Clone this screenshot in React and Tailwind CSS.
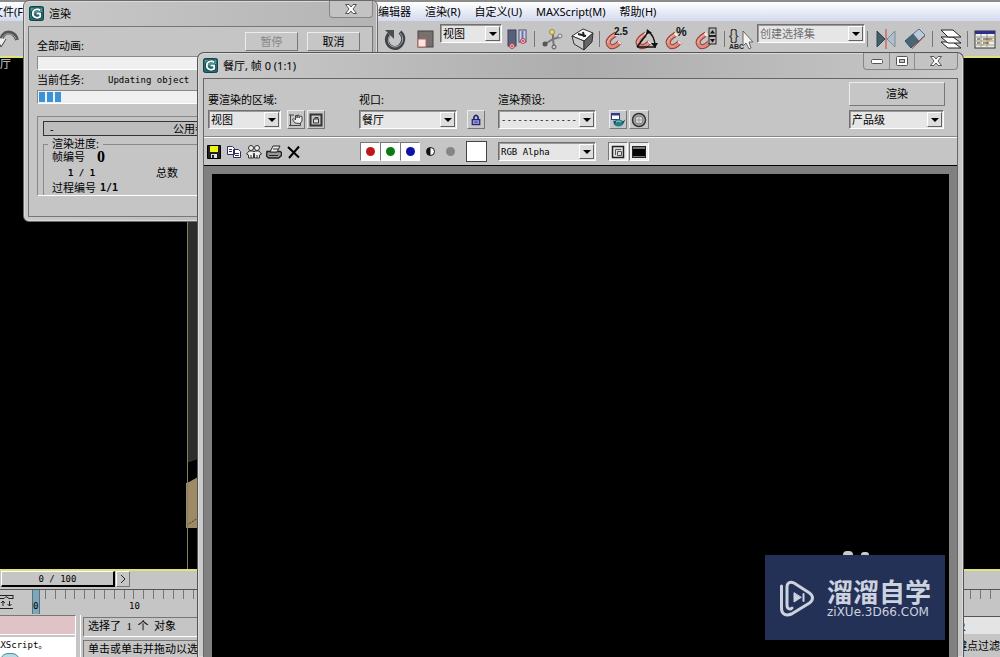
import React from 'react'
import clsx from 'clsx'

const menus = ['编辑器', '渲染(R)', '自定义(U)', 'MAXScript(M)', '帮助(H)']
const ticks = Array.from({ length: 98 }, (_, i) => i)

function AppLogo() {
  return (
    <svg viewBox="0 0 16 16" className="size-[15px] shrink-0">
      <rect x="0.5" y="0.5" width="15" height="15" rx="2" fill="#1d6d70" stroke="#0b3b42" />
      <path d="M2 2h12v5C9 5 5 8 2 12z" fill="#4f9c9b" />
      <path d="M12.500 4.500C9 2.500 3.500 3.500 3.500 8s5 5.500 9 3.500V8H8" fill="none" stroke="#0b3b42" strokeWidth="3" strokeLinejoin="round" />
      <path d="M12 4.500C9 2.500 4 3.500 4 8s5 5.500 8 3.500V8H8" fill="none" stroke="#fff" strokeWidth="2" strokeLinejoin="round" />
    </svg>
  )
}

// Native select with the flat 3D arrow button on its right side
function Combo({ label, id, value, className, muted, mono }) {
  return (
    <div className={clsx('relative h-[19px] shrink-0 border border-[#707070] border-r-white border-b-white bg-[#e6e6e6] shadow-[inset_1px_1px_0_#9a9a9a]', className)}>
      <select
        id={id}
        aria-label={label}
        className={clsx(
          'block h-full w-full appearance-none overflow-hidden bg-transparent pr-4 pl-[2px] leading-4 outline-none',
          muted ? 'text-[#707070]' : 'text-black',
          mono ? "font-['DejaVu_Sans_Mono',monospace] text-[9px]" : 'text-[11px]'
        )}
      >
        <option>{value}</option>
      </select>
      <span className="pointer-events-none absolute inset-y-px right-px flex w-[15px] items-center justify-center border border-white border-r-[#606060] border-b-[#606060] bg-[#dedede]">
        <svg viewBox="0 0 8 4" className="h-1 w-2">
          <path d="M0 0h8L4 4z" fill="#000" />
        </svg>
      </span>
    </div>
  )
}

function PushButton({ children, className, disabled }) {
  return (
    <button
      type="button"
      disabled={disabled}
      className={clsx('border border-[#ececec] border-r-[#777] border-b-[#777] bg-[#c6c6c6] text-[11px] leading-4', disabled ? 'text-[#868686]' : 'text-black', className)}
    >
      {children}
    </button>
  )
}

function IconButton({ label, variant, className, children }) {
  return (
    <button
      type="button"
      aria-label={label}
      className={clsx(
        'flex h-[19px] w-5 shrink-0 items-center justify-center',
        variant === 'raised' && 'border border-[#ececec] border-r-[#777] border-b-[#777] bg-[#c6c6c6]',
        variant === 'pressed' && 'border border-[#777] border-r-white border-b-white bg-[#ececec]',
        className
      )}
    >
      {children}
    </button>
  )
}

function Tool({ label, flyout, children }) {
  return (
    <button type="button" aria-label={label} className="relative flex h-8 w-[30px] shrink-0 items-center justify-center">
      <svg viewBox="0 0 24 24" className="size-6 overflow-visible" fill="none">
        {children}
      </svg>
      {flyout && (
        <svg viewBox="0 0 3 3" className="absolute right-0 bottom-0 size-[3px]">
          <path d="M3 0v3H0z" fill="#222" />
        </svg>
      )}
    </button>
  )
}

function Separator() {
  return (
    <div className="flex h-4 w-[5px] shrink-0 justify-center">
      <div className="w-px bg-[#777]" />
    </div>
  )
}

function Magnet() {
  return (
    <g>
      <path d="M11 7C6 10 1 14 4 18s8 0 11-3" stroke="#8f4038" strokeWidth="5" />
      <path d="M11 7C6 10 1 14 4 18s8 0 11-3" stroke="#df8a7d" strokeWidth="3" />
      <path d="M10 7C6 10 2 13 3 16" stroke="#f3c1b6" strokeWidth="1" />
      <path d="M10 8l2-1M14 16l1-1" stroke="#f5eee8" strokeWidth="4" />
    </g>
  )
}

function MainToolbar() {
  return (
    <div className="flex h-[35px] shrink-0 items-center bg-[#c5c5c5] text-[11px]">
      <div className="flex w-[380px] shrink-0">
        <button type="button" aria-label="撤消" className="-ml-1">
          <svg viewBox="0 0 24 24" className="size-6" fill="none">
            <path d="M6 17c-2-8 3-13 9-11 3 1 5 3 6 7" stroke="#555" strokeWidth="4" />
            <path d="M6 15c-1-6 4-9 8-8 3 1 5 2 6 5" stroke="#aaa" strokeWidth="1" />
            <path d="M1 11l4 9 5-8" fill="#eee" stroke="#444" />
          </svg>
        </button>
      </div>
      <Tool label="旋转">
        <path d="M17 5c7 7 1 16-5 16S1 14 6 7" stroke="#3f4348" strokeWidth="4" />
        <path d="M17 6c6 6 1 14-5 14S3 14 7 8" stroke="#a5a9ad" strokeWidth="1" />
        <path d="M2 3l9 0v9z" fill="#4a4e52" />
      </Tool>
      <Tool label="缩放" flyout>
        <rect x="5" y="4" width="15" height="16" fill="#77706e" stroke="#444" />
        <rect x="5" y="12" width="8" height="8" fill="#fbe4df" stroke="#a66" />
      </Tool>
      <div className="h-[29px] shrink-0">
        <Combo label="参考坐标系" value="视图" className="w-[62px]" />
      </div>
      <Tool label="轴点中心" flyout>
        <rect x="3" y="3" width="8" height="16" fill="#596079" stroke="#3b405a" />
        <rect x="14" y="3" width="7" height="12" fill="#cfd3e8" stroke="#4b5378" />
        <path d="M17.500 4v11" stroke="#6973a8" strokeWidth="2" />
        <circle cx="7" cy="19" r="2.500" fill="#e8c9cf" stroke="#c03a4c" />
        <circle cx="18" cy="14" r="2.500" fill="#e8c9cf" stroke="#c03a4c" />
        <circle cx="7" cy="19" r="1" fill="#c03a4c" />
        <circle cx="18" cy="14" r="1" fill="#c03a4c" />
      </Tool>
      <Separator />
      <Tool label="选择并操纵">
        <path d="M13 12V5M13 12l7-2M13 12l-8 5M13 12l1 8" stroke="#777" strokeWidth="2" />
        <circle cx="12" cy="5" r="2.500" fill="#e8d879" stroke="#9a8a3c" />
        <circle cx="20" cy="9" r="2" fill="#ddd" stroke="#777" />
        <circle cx="5" cy="17" r="2.500" fill="#555" />
        <circle cx="14" cy="20" r="2" fill="#ccc" stroke="#555" />
      </Tool>
      <Tool label="键盘快捷键覆盖">
        <path d="M2 9L13 2l10 4-9 8z" fill="#fafafa" stroke="#333" />
        <path d="M2 9l12 5v9L4 17z" fill="#c9c9c9" stroke="#333" />
        <path d="M14 14l9-8-1 9-8 8z" fill="#666" stroke="#333" />
        <path d="M8 7l8 2M13 5l1 5" stroke="#222" strokeWidth="2" />
      </Tool>
      <Separator />
      <Tool label="捕捉开关" flyout>
        <Magnet />
        <text x="9" y="8" fontSize="10" fontWeight="700" fill="#111" fontFamily="Liberation Sans, sans-serif">2.5</text>
      </Tool>
      <Tool label="角度捕捉">
        <Magnet />
        <path d="M2 20L14 4M2 20h19M13 4c5 4 7 9 7 15" stroke="#111" strokeWidth="1.500" />
        <path d="M11 7l1-5 5 4zM16 16h7l-3 5z" fill="#111" />
      </Tool>
      <Tool label="百分比捕捉">
        <Magnet />
        <text x="11" y="9" fontSize="12" fontWeight="700" fill="#111" fontFamily="Liberation Sans, sans-serif">%</text>
      </Tool>
      <Tool label="微调器捕捉">
        <Magnet />
        <rect x="14" y="1" width="7" height="16" fill="#bbb" stroke="#222" />
        <path d="M14 9h7" stroke="#222" strokeWidth="2" />
        <path d="M15 6.500L17.500 3 20 6.500zM15 12L17.500 15.500 20 12z" fill="#111" />
      </Tool>
      <Separator />
      <Tool label="编辑命名选择集">
        <text x="-1" y="13" fontSize="14" fill="#333" fontFamily="Liberation Sans, sans-serif">{'{}'}</text>
        <text x="-1" y="22" fontSize="7" fontWeight="700" fill="#222" fontFamily="Liberation Sans, sans-serif">ABC</text>
        <path d="M13 4v15l3-3 3 6 2-1-2-6h4z" fill="#f4f4f4" stroke="#666" />
      </Tool>
      <div className="h-[29px] shrink-0">
        <Combo label="命名选择集" value="创建选择集" muted className="w-[108px]" />
      </div>
      <Separator />
      <Tool label="镜像">
        <path d="M4 4l8 8-8 8z" fill="#43606e" stroke="#2d4450" />
        <path d="M22 4l-8 8 8 8z" fill="#aebfca" stroke="#7c8e99" />
        <path d="M13 2v20" stroke="#c9403a" />
      </Tool>
      <Tool label="对齐" flyout>
        <path d="M2 14l8-7 6 7-8 7z" fill="#496675" stroke="#33505f" />
        <path d="M10 7l6-5 6 6-6 6z" fill="#bccbdc" stroke="#566e85" />
        <path d="M9 22L22 9" stroke="#d2604e" />
      </Tool>
      <Separator />
      <Tool label="层管理器">
        <path d="M3 15h12l8 6H10z" fill="#fff" stroke="#222" />
        <path d="M3 10h12l8 6H10z" fill="#fff" stroke="#222" />
        <path d="M3 3h12l8 7H10z" fill="#fff" stroke="#222" />
      </Tool>
      <Separator />
      <Tool label="曲线编辑器">
        <rect x="2" y="4" width="20" height="17" fill="#f1efe0" stroke="#333" />
        <path d="M2 5.500h20" stroke="#2b2f8f" strokeWidth="3" />
        <path d="M8 7v14M2 10h20M2 14h20M2 18h20M14 7v14" stroke="#999" />
        <path d="M4 12h3M4 16h3M10 12h9M10 16h6" stroke="#333" />
        <path d="M9 18l6-4 6-3" stroke="#c7a92c" />
      </Tool>
    </div>
  )
}

function Viewport() {
  return (
    <div className="relative min-h-0 flex-1 overflow-hidden border-y-2 border-[#e2e27a] bg-black">
      <span className="absolute top-0 -left-[11px] text-[11px] leading-3 text-[#d4d4d4]">餐厅</span>
      <svg className="ml-[186px] block h-full w-[12px]" fill="none">
        <rect x="2" y="150" width="10" height="254" fill="#2d2d2d" />
        <path d="M1 405l11-4v18H1z" fill="#000" />
        <path d="M0 425l3-1 9-5v51H0z" fill="#9f8a68" />
        <path d="M1 467l11-7" stroke="#473c2c" strokeDasharray="2 1" />
        <path d="M1.500 0v520" stroke="#84805a" />
      </svg>
    </div>
  )
}

function TimeSlider() {
  return (
    <div className="shrink-0 bg-[#c5c5c5] font-['DejaVu_Sans_Mono','Noto_Sans_CJK_SC',monospace] text-[9px]">
      <div className="flex h-[18px] gap-px pl-px">
        <button type="button" className="h-4 w-[114px] border border-white border-r-2 border-r-black border-b-2 border-b-black leading-3">
          0 / 100
        </button>
        <button type="button" aria-label="下一帧" className="flex h-4 w-[14px] items-center justify-center border border-white border-r-[#777] border-b-[#777]">
          <svg viewBox="0 0 6 10" className="h-[10px] w-[6px]" fill="none">
            <path d="M1 1l4 4-4 4" stroke="#222" />
          </svg>
        </button>
      </div>
      <div className="flex h-[26px] border-t border-[#555]">
        <div className="w-8 shrink-0 pt-1">
          <svg viewBox="0 0 14 16" className="h-4 w-[14px]" fill="none" stroke="#222">
            <path d="M0 1.500h13M0 4.500h4l2-2 3 2h4M13 1v4M0 14.500h13" />
            <path d="M3 7v5M1 9l2-2 2 2M9.500 7v5M7.500 10l2 2 2-2" />
          </svg>
        </div>
        <div className="flex h-6 w-1 shrink-0 border-l border-[#4d7385] bg-[#7fa5b8]" />
        <div className="flex min-w-0 flex-1">
          {ticks.map((t) => (
            <div key={t} className={clsx('h-[9px] min-w-0 flex-1', t > 0 ? 'border-l border-[#777]' : 'relative')}>
              {t === 0 && <div className="h-6 w-1 border-r border-[#4d7385] bg-[#7fa5b8]" />}
              {t === 0 && <span className="absolute top-2 -left-[3px] leading-4">0</span>}
              {t > 0 && t % 10 === 0 && (
                <span className="flex w-4 -translate-x-2 justify-center pt-2 leading-4">{t}</span>
              )}
            </div>
          ))}
        </div>
      </div>
    </div>
  )
}

function StatusBar() {
  return (
    <div className="flex h-[42px] shrink-0 overflow-hidden bg-[#c5c5c5] text-[11px] leading-4 whitespace-nowrap">
      <div className="flex w-[76px] shrink-0 flex-col border-t border-r border-[#777] border-r-white">
        <div className="h-[19px] shrink-0 border-b border-white bg-[#dfc3c6]" />
        <div className="mt-[2px] shrink-0 bg-white">
          <div className="-ml-[5px] font-['DejaVu_Sans_Mono','Noto_Sans_CJK_SC',monospace] text-[9px] leading-4">AXScript。</div>
          <div className="h-4 w-5 rounded-full border border-[#4c8aa3] bg-[#b9dbe6]" />
        </div>
      </div>
      <div className="ml-1 flex min-w-0 flex-1 flex-col gap-[3px] border-l border-white pt-[2px] pl-[2px]">
        <div className="h-5 shrink-0 border border-[#777] border-r-white border-b-white pl-1 font-['Liberation_Serif','Noto_Sans_CJK_SC',serif]">选择了&nbsp; 1 &nbsp;个&nbsp; 对象</div>
        <div className="h-5 shrink-0 border border-[#777] border-r-white border-b-white pl-1">单击或单击并拖动以选择对象</div>
      </div>
      <div className="w-[78px] shrink-0 overflow-hidden">
        <input aria-label="选定对象" defaultValue="选定对象" className="mt-px block h-[18px] w-full border-t border-[#555] bg-[#e4e4e4]" />
        <button type="button" className="mt-1 pl-[23px] text-left">关键点过滤器...</button>
      </div>
    </div>
  )
}

function CaptionButtons({ closeOnly }) {
  return (
    <div className="flex h-[17px] rounded-b border border-t-0 border-[#858585] bg-[#c3c3c3]">
      {!closeOnly && (
        <>
          <button type="button" aria-label="最小化" className="flex w-[26px] items-center justify-center border-r border-[#8d8d8d]">
            <svg viewBox="0 0 12 5" className="h-[5px] w-3">
              <rect x="0.500" y="0.500" width="11" height="4" rx="1" fill="#fff" stroke="#555" />
            </svg>
          </button>
          <button type="button" aria-label="最大化" className="flex w-[25px] items-center justify-center border-r border-[#8d8d8d]">
            <svg viewBox="0 0 12 10" className="h-[10px] w-3">
              <rect x="0.500" y="0.500" width="11" height="9" rx="1" fill="#fff" stroke="#555" />
              <rect x="3.500" y="3.500" width="5" height="3" fill="#c3c3c3" stroke="#555" />
            </svg>
          </button>
        </>
      )}
      <button type="button" aria-label="关闭" className="flex w-[42px] items-center justify-center">
        <svg viewBox="0 0 12 10" className="h-[10px] w-3">
          <path d="M0.500 0.500h3.500l2 2.500 2-2.500h3.500L8 5l3.500 4.500H8L6 7 4 9.500H0.500L4 5z" fill="#fff" stroke="#555" />
        </svg>
      </button>
    </div>
  )
}

function ProgressDialog() {
  return (
    <section className="absolute top-0 left-[23px] flex h-[222px] w-[355px] flex-col rounded-[6px] border border-[#6a6a6a] bg-linear-to-r from-[#c9c9c9] to-[#b4b4b4] px-1 pb-1 text-[11px] leading-4 whitespace-nowrap shadow-[inset_0_0_0_1px_#dadada]">
      <header className="flex h-[25px] shrink-0 justify-between">
        <h2 className="flex items-center gap-[5px] pl-px">
          <AppLogo />
          渲染
        </h2>
        <CaptionButtons closeOnly />
      </header>
      <div className="flex-1 border border-[#777] bg-[#c5c5c5] px-2 pt-[5px]">
        <div className="flex h-6 items-start gap-[9px] pr-1">
          <label htmlFor="total" className="mr-auto pt-[6px]">全部动画:</label>
          <PushButton disabled className="h-[19px] w-[53px]">暂停</PushButton>
          <PushButton className="h-[19px] w-[53px]">取消</PushButton>
        </div>
        <progress id="total" value="0" max="100" className="block h-[14px] w-full appearance-none border border-[#888] border-r-white border-b-white bg-[#f0f0f0] [&::-webkit-progress-bar]:bg-[#f0f0f0]" />
        <div className="flex h-5 items-center">
          <span className="w-[71px]">当前任务:</span>
          <span className="font-['DejaVu_Sans_Mono',monospace] text-[9px]">Updating object</span>
        </div>
        <div role="progressbar" aria-label="当前任务" aria-valuenow="10" className="flex h-[14px] gap-[2px] border border-[#888] border-r-white border-b-white bg-[#f0f0f0] p-px">
          <div className="w-[6px] bg-[#3b92d6]" />
          <div className="w-[6px] bg-[#3b92d6]" />
          <div className="w-[6px] bg-[#3b92d6]" />
        </div>
        <div className="mt-3 h-[80px] border border-[#888] border-r-white border-b-white pt-1 pr-4 pl-[5px]">
          <button type="button" className="relative block h-[15px] w-full border border-[#333] bg-[#bdbdbd] leading-3">
            <span className="absolute left-[6px]">-</span>
            公用参数
          </button>
          <fieldset className="h-[59px] border border-b-0 border-[#8a8a8a] pl-2">
            <legend className="-ml-1 px-1 leading-4">渲染进度:</legend>
            <div className="-mt-[3px] flex h-4 gap-3 leading-4">
              帧编号
              <b className="font-['Liberation_Serif',serif] text-[16px]">0</b>
            </div>
            <div className="flex h-[15px] items-center">
              <b className="w-[104px] pl-4 font-['DejaVu_Sans_Mono',monospace] text-[9px]">1 / 1</b>
              总数
            </div>
            <div className="flex h-4 items-center gap-1">
              过程编号
              <b className="font-['DejaVu_Sans_Mono',monospace] text-[10px]">1/1</b>
            </div>
          </fieldset>
        </div>
      </div>
    </section>
  )
}

function FrameWindow() {
  return (
    <section className="absolute top-[52px] right-[36px] bottom-0 left-[197px] flex flex-col rounded-t-[7px] border border-b-0 border-[#555] bg-linear-to-r from-[#cbcbcb] via-[#adadad] to-[#c8c8c8] px-[5px] text-[11px] leading-4 whitespace-nowrap shadow-[inset_0_0_0_1px_#dadada]">
      <header className="flex h-[25px] shrink-0 justify-between">
        <h2 className="flex items-center gap-[5px]">
          <AppLogo />
          <span>餐厅, 帧 0 (1:1)</span>
        </h2>
        <CaptionButtons />
      </header>
      <div className="flex min-h-0 flex-1 flex-col border border-b-0 border-[#666] bg-[#c5c5c5]">
        <div className="flex h-[58px] shrink-0 items-start border-b border-[#888] pr-3 pl-1">
          <div className="w-[151px] shrink-0 pt-[13px]">
            <label htmlFor="area" className="block h-[18px]">要渲染的区域:</label>
            <div className="flex items-center gap-[2px]">
              <Combo id="area" label="要渲染的区域" value="视图" className="mr-1 w-[73px]" />
              <IconButton label="编辑区域" variant="raised" className="w-[18px]">
                <svg viewBox="0 0 16 16" className="size-4 shrink-0" fill="none" stroke="#444">
                  <path d="M2.500 3v10.500h10V11M1 3h5M1 13.500h3" />
                  <path d="M7 11L4.500 7.500l1.500-1L7.500 8V3.500H9V6l.500-3H11v3l1.500-2 1.500.500V9l-2 2.500z" fill="#eee" />
                </svg>
              </IconButton>
              <IconButton label="自动选定区域" variant="raised" className="w-[18px]">
                <svg viewBox="0 0 16 16" className="size-4 shrink-0" fill="none" stroke="#333">
                  <rect x="2.500" y="2.500" width="11" height="11" strokeWidth="2" />
                  <path d="M5.500 7h5v4h-5zM7 7V5.500h3V7" fill="#ddd" />
                </svg>
              </IconButton>
            </div>
          </div>
          <div className="w-[139px] shrink-0 pt-[13px]">
            <label htmlFor="viewport" className="block h-[18px]">视口:</label>
            <div className="flex">
              <Combo id="viewport" label="视口" value="餐厅" className="mr-[10px] w-[98px]" />
              <IconButton label="锁定视口" variant="raised" className="w-[18px]">
                <svg viewBox="0 0 12 14" className="h-3 w-[10px]" fill="none" stroke="#23237a">
                  <path d="M3.500 7V3.500q2.500-4 5 0V7" strokeWidth="2" />
                  <rect x="1.500" y="6.500" width="9" height="6" fill="#9999d6" strokeWidth="1.500" />
                  <path d="M4 9.500h4" />
                </svg>
              </IconButton>
            </div>
          </div>
          <div className="shrink-0 pt-[13px]">
            <label htmlFor="preset" className="block h-[18px]">渲染预设:</label>
            <div className="flex gap-[2px]">
              <Combo id="preset" label="渲染预设" value="--------------" mono className="mr-[11px] w-[98px]" />
              <IconButton label="渲染设置" variant="raised" className="w-[18px]">
                <svg viewBox="0 0 16 16" className="size-4 shrink-0">
                  <rect x="1.500" y="1.500" width="8" height="6" fill="#fff" stroke="#333b88" />
                  <path d="M1 2.500h9" stroke="#333b88" strokeWidth="2" />
                  <ellipse cx="8.500" cy="11" rx="5" ry="3.500" fill="#267f86" />
                  <path d="M3 8.500l3 1-1 3zM15.500 7.500L12 10l1 2z" fill="#0f4b52" />
                  <path d="M6 10q2-2 5 0" stroke="#9cd0d0" fill="none" />
                </svg>
              </IconButton>
              <IconButton label="环境和效果" variant="raised">
                <svg viewBox="0 0 16 16" className="size-4 shrink-0" fill="none" stroke="#333">
                  <circle cx="8" cy="8" r="6.500" fill="#aaa" strokeWidth="1.500" />
                  <circle cx="8" cy="8" r="4" fill="#ddd" stroke="#777" />
                  <path d="M8 5v6M5 8h6" stroke="#999" />
                </svg>
              </IconButton>
            </div>
          </div>
          <div className="ml-auto flex flex-col gap-1 pt-[3px]">
            <PushButton className="h-6 w-[96px]">渲染</PushButton>
            <Combo label="渲染模式" value="产品级" className="w-[95px]" />
          </div>
        </div>

        <div className="flex h-[29px] shrink-0 items-center border-t border-b border-white border-b-black">
          <div className="flex w-[156px] shrink-0">
            <IconButton label="保存图像">
              <svg viewBox="0 0 14 14" className="size-[14px]">
                <path d="M0.500 0.500h13v13h-13z" fill="#222" stroke="#000" />
                <path d="M3 1h8v6H3z" fill="#f2f21a" />
                <path d="M4 9h6v4H4z" fill="#ddd" />
                <path d="M5 10h2v3H5z" fill="#222" />
              </svg>
            </IconButton>
            <IconButton label="复制图像">
              <svg viewBox="0 0 14 14" className="size-[14px]" fill="#fff" stroke="#2b2f66">
                <path d="M0.500 1.500h5l2 2v6h-7zM6.500 4.500h5l2 2v6h-7z" />
                <path d="M2 4.500h3M2 6.500h3M8 8.500h4M8 10.500h4" />
              </svg>
            </IconButton>
            <IconButton label="克隆窗口">
              <svg viewBox="0 0 16 14" className="h-[14px] w-4" fill="#eee" stroke="#333">
                <circle cx="5" cy="3" r="2.500" />
                <circle cx="11" cy="3" r="2.500" />
                <path d="M3 6L0.500 9l2 1V13h5v-3L8 8l.500 2v3h5v-3l2-1L13 6H9L8 7 7 6zM5 10v3M11 10v3" />
              </svg>
            </IconButton>
            <IconButton label="打印图像">
              <svg viewBox="0 0 16 14" className="h-[14px] w-4" fill="#eee" stroke="#222">
                <path d="M1 6.500h13l1.500 1v3l-3 2.500h-10L0.500 11z" fill="#999" strokeWidth="1.500" />
                <path d="M4 7l3-6h7l-3 6zM7 4h5M3 10.500h9" />
              </svg>
            </IconButton>
            <IconButton label="清除">
              <svg viewBox="0 0 14 14" className="size-[14px]" fill="none" stroke="#000">
                <path d="M1 2l11 10.500M12 1.500L2 13" strokeWidth="2" />
              </svg>
            </IconButton>
          </div>
          <div className="flex w-[106px] shrink-0">
            <IconButton label="启用红色通道" variant="pressed" className="bg-white">
              <span className="size-[9px] rounded-full bg-[#c01818]" />
            </IconButton>
            <IconButton label="启用绿色通道" variant="pressed" className="bg-white">
              <span className="size-[9px] rounded-full bg-[#0b7a14]" />
            </IconButton>
            <IconButton label="启用蓝色通道" variant="pressed" className="bg-white">
              <span className="size-[9px] rounded-full bg-[#0b12a8]" />
            </IconButton>
            <IconButton label="显示 Alpha 通道">
              <svg viewBox="0 0 9 9" className="size-[9px]">
                <circle cx="4.500" cy="4.500" r="4" fill="#fff" stroke="#111" />
                <path d="M4.500 0.500a4 4 0 0 0 0 8z" fill="#111" />
              </svg>
            </IconButton>
            <IconButton label="单色">
              <span className="size-[9px] rounded-full bg-[#858585]" />
            </IconButton>
          </div>
          <button type="button" aria-label="颜色样例" className="mr-[11px] size-[21px] shrink-0 border border-[#444] bg-white" />
          <Combo label="通道显示" value="RGB Alpha" mono className="mr-3 w-[98px]" />
          <div className="flex gap-px">
            <IconButton label="切换 UI 叠加" variant="pressed">
              <svg viewBox="0 0 14 14" className="size-[14px]" fill="none" stroke="#222">
                <rect x="1.500" y="1.500" width="11" height="11" fill="#ddd" strokeWidth="1.500" />
                <path d="M4.500 10V4.500H10M6.500 10.500v-4h4v4z" stroke="#555" />
              </svg>
            </IconButton>
            <IconButton label="切换 UI" variant="pressed">
              <svg viewBox="0 0 14 12" className="h-3 w-[14px]">
                <rect x="0.500" y="0.500" width="13" height="11" fill="#777" stroke="#222" />
                <rect x="1" y="3" width="12" height="7" fill="#000" />
              </svg>
            </IconButton>
          </div>
        </div>

        <div className="min-h-0 flex-1 bg-[#808080] px-2 pt-2">
          <div className="h-full bg-black" />
        </div>
      </div>
    </section>
  )
}

function Watermark() {
  return (
    <div className="absolute right-[55px] bottom-[17px] text-[#cdd2df]">
      <div className="flex h-1 gap-2 pl-[78px]">
        <div className="h-1 w-[10px] rounded-t-full bg-[#c9c9c9]" />
        <div className="mt-px h-[3px] w-2 rounded-t-full bg-[#c9c9c9]" />
      </div>
      <div className="flex h-[85px] w-[180px] items-center gap-3 bg-[#243156] pl-[14px]">
        <svg viewBox="0 0 36 38" className="h-[38px] w-9 shrink-0" fill="none" stroke="currentColor" strokeWidth="3" strokeLinecap="round" strokeLinejoin="round">
          <path d="M2.500 7v22c0 7 5 8 10 6l18-11c4-3 4-7 0-10L15 4c-4-2-7 0-7 4v18c0 4 3 5 5 3" />
          <path d="M15 14v9l7-4.500z" fill="currentColor" strokeWidth="1" />
          <path d="M24.500 15v7" strokeWidth="2" />
        </svg>
        <div className="whitespace-nowrap">
          <div className="text-[26px] leading-7 font-bold">溜溜自学</div>
          <div className="font-['DejaVu_Sans',sans-serif] text-[12px] leading-3">ziXUe.3D66.COM</div>
        </div>
      </div>
    </div>
  )
}

export default function App() {
  return (
    <main className="relative flex h-screen flex-col overflow-hidden bg-black font-['Noto_Sans','Noto_Sans_CJK_SC',sans-serif] text-black">
      <nav className="flex h-[21px] shrink-0 items-center border-t-2 border-[#8c8c8c] bg-linear-to-b from-white to-[#d3daee] text-[11px] leading-4 whitespace-nowrap">
        <button type="button" className="-ml-2 w-[386px] shrink-0 text-left">文件(F)</button>
        <div className="flex gap-[14px]">
          {menus.map((m) => (
            <button key={m} type="button">{m}</button>
          ))}
        </div>
      </nav>
      <MainToolbar />
      <Viewport />
      <TimeSlider />
      <StatusBar />
      <ProgressDialog />
      <FrameWindow />
      <Watermark />
    </main>
  )
}
